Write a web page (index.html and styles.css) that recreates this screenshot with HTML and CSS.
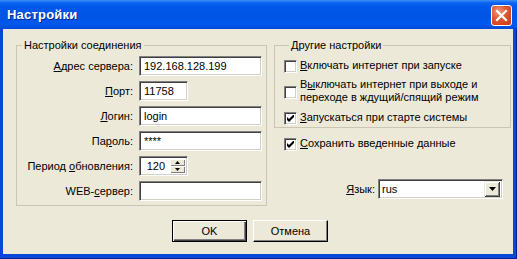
FILE: index.html
```html
<!DOCTYPE html>
<html lang="ru">
<head>
    <meta charset="UTF-8">
    <title>Настройки</title>
    <link rel="stylesheet" href="styles.css">
</head>
<body>
    <div class="window">
        <div class="titlebar">
            <span class="title">Настройки</span>
            <button class="close-btn" aria-label="Закрыть">
                <svg width="13" height="13" viewBox="0 0 13 13">
                    <path d="M2 2 L11 11 M11 2 L2 11" stroke="#fff" stroke-width="2.2" stroke-linecap="square"/>
                </svg>
            </button>
        </div>

        <div class="client">
            <div class="panels">
                <fieldset class="group conn">
                    <legend>Настройки соединения</legend>
                    <div class="form-grid">
                        <label><u>А</u>дрес сервера:</label>
                        <div class="edit wide">192.168.128.199</div>

                        <label><u>П</u>орт:</label>
                        <div class="edit short">11758</div>

                        <label><u>Л</u>огин:</label>
                        <div class="edit wide">login</div>

                        <label>Па<u>р</u>оль:</label>
                        <div class="edit wide">****</div>

                        <label>Период <u>о</u>бновления:</label>
                        <div class="edit short spin">
                            <span class="spin-value">120</span>
                            <span class="spin-btns">
                                <span class="spin-btn"><svg width="5" height="3" viewBox="0 0 5 3"><path d="M2.5 0 L5 3 L0 3Z" fill="#000"/></svg></span>
                                <span class="spin-btn"><svg width="5" height="3" viewBox="0 0 5 3"><path d="M0 0 L5 0 L2.5 3Z" fill="#000"/></svg></span>
                            </span>
                        </div>

                        <label>WEB-<u>с</u>ервер:</label>
                        <div class="edit wide"></div>
                    </div>
                </fieldset>

                <div class="right-col">
                    <fieldset class="group other">
                        <legend>Другие настройки</legend>
                        <div class="check-row">
                            <span class="check"></span>
                            <span class="check-text"><u>В</u>ключать интернет при запуске</span>
                        </div>
                        <div class="check-row row-2">
                            <span class="check"></span>
                            <span class="check-text">В<u>ы</u>ключать интернет при выходе и<br>переходе в ждущий/спящий режим</span>
                        </div>
                        <div class="check-row row-3">
                            <span class="check checked"><svg width="7" height="7" viewBox="0 0 7 7"><path d="M0 2 L0 5 L2 7 L7 2 L7 -1 L2 4Z" fill="#000"/></svg></span>
                            <span class="check-text"><u>З</u>апускаться при старте системы</span>
                        </div>
                    </fieldset>

                    <div class="check-row save-row">
                        <span class="check checked"><svg width="7" height="7" viewBox="0 0 7 7"><path d="M0 2 L0 5 L2 7 L7 2 L7 -1 L2 4Z" fill="#000"/></svg></span>
                        <span class="check-text"><u>С</u>охранить введенные данные</span>
                    </div>

                    <div class="lang-row">
                        <label><u>Я</u>зык:</label>
                        <div class="edit combo">
                            <span class="combo-value">rus</span>
                            <span class="combo-btn"><svg width="7" height="4" viewBox="0 0 7 4"><path d="M0 0 L7 0 L3.5 4Z" fill="#000"/></svg></span>
                        </div>
                    </div>
                </div>
            </div>

            <div class="buttons">
                <button class="btn default">OK</button>
                <button class="btn">Отмена</button>
            </div>
        </div>
    </div>
</body>
</html>
```

FILE: styles.css
```css
body {
    margin: 0;
    background-color: #0a46d8;
}

.window {
    width: 517px;
    height: 259px;
    display: flex;
    flex-direction: column;
    background-color: #0a46d8;
    box-shadow: inset -1px -1px 0 #00209a;
    font-family: "Liberation Sans", Arial, sans-serif;
    font-size: 11px;
    color: #000;
}

/* title bar */
.titlebar {
    height: 29px;
    flex: none;
    display: flex;
    align-items: center;
    justify-content: space-between;
    padding: 0 5px 0 7px;
    background: linear-gradient(to bottom, #3d8ff8 0, #0b62f0 3px, #0058ea 7px, #0054e5 55%, #0058ec 85%, #0549d8 100%);
}

.title {
    color: #fff;
    font-weight: bold;
    font-size: 13px;
    letter-spacing: 0.2px;
    text-shadow: 1px 1px 0 #0a2a8c;
    margin-top: -1px;
}

.close-btn {
    width: 21px;
    height: 21px;
    padding: 0;
    margin-top: 1px;
    border: 1px solid #fff;
    border-radius: 3px;
    background: radial-gradient(circle at 35% 30%, #f09a7c 0, #e0542f 45%, #c43a14 100%);
    display: flex;
    align-items: center;
    justify-content: center;
}

/* client area */
.client {
    flex: 1;
    margin: 0 4px 5px 3px;
    padding: 10px 0 0 13px;
    background-color: #ece9d8;
}

.panels {
    display: flex;
    align-items: flex-start;
    gap: 7px;
}

.group {
    margin: 0;
    border: 1px solid #c9c6b6;
    min-width: 0;
    box-sizing: border-box;
}

.group legend {
    margin-left: 5px;
    padding: 0 2px;
    line-height: 13px;
}

.conn {
    width: 251px;
    padding: 4px 4px 4px 0;
}

.form-grid {
    display: grid;
    grid-template-columns: 116px auto;
    column-gap: 6px;
    row-gap: 5px;
    align-items: center;
    justify-items: start;
}

.form-grid label {
    justify-self: end;
    line-height: 13px;
}

/* sunken edit */
.edit {
    box-sizing: border-box;
    height: 20px;
    padding: 0 4px;
    line-height: 18px;
    background-color: #fff;
    border: 1px solid;
    border-color: #808080 #fff #fff #808080;
    box-shadow: inset 1px 1px 0 #404040, inset -1px -1px 0 #d4d0c8;
    white-space: nowrap;
}

.wide {
    width: 123px;
}

.short {
    width: 49px;
}

.spin {
    display: flex;
    padding: 2px 2px 2px 0;
}

.spin-value {
    flex: 1;
    text-align: right;
    padding-right: 5px;
    line-height: 14px;
}

.spin-btns {
    width: 15px;
    display: flex;
    flex-direction: column;
}

.spin-btn {
    flex: 1;
    display: flex;
    align-items: center;
    justify-content: center;
    background-color: #ece9d8;
    box-shadow: inset 1px 1px 0 #fff, inset -1px -1px 0 #808080;
}

/* right column */
.right-col {
    width: 237px;
}

.other {
    width: 237px;
    padding: 8px 0 2px 9px;
}

.check-row {
    display: flex;
    align-items: center;
    gap: 3px;
}

.check-text {
    line-height: 13px;
    margin-top: -3px;
}

.row-2 {
    margin-top: 7px;
}

.row-2 .check-text {
    margin-top: -2px;
}

.row-3 {
    margin-top: 8px;
}

.check {
    width: 13px;
    height: 13px;
    flex: none;
    box-sizing: border-box;
    background-color: #fff;
    border: 1px solid;
    border-color: #808080 #fff #fff #808080;
    box-shadow: inset 1px 1px 0 #404040, inset -1px -1px 0 #d4d0c8;
    display: flex;
    align-items: center;
    justify-content: center;
}

.save-row {
    margin-top: 10px;
    padding-left: 10px;
}

.lang-row {
    margin-top: 28px;
    padding-right: 8px;
    display: flex;
    justify-content: flex-end;
    align-items: center;
    gap: 3px;
}

.combo {
    width: 125px;
    display: flex;
    align-items: center;
    padding: 2px 2px 2px 3px;
}

.combo-value {
    flex: 1;
    line-height: 14px;
}

.combo-btn {
    width: 16px;
    height: 16px;
    display: flex;
    align-items: center;
    justify-content: center;
    background-color: #ece9d8;
    box-shadow: inset 1px 1px 0 #ece9d8, inset -1px -1px 0 #404040, inset 2px 2px 0 #fff, inset -2px -2px 0 #808080;
}

/* buttons */
.buttons {
    margin-top: 14px;
    padding-left: 156px;
    display: flex;
    gap: 6px;
}

.btn {
    width: 75px;
    height: 22px;
    padding: 0;
    font-family: inherit;
    font-size: 11px;
    color: #000;
    background-color: #ece9d8;
    border: 1px solid;
    border-color: #fff #000 #000 #fff;
    box-shadow: inset -1px -1px 0 #808080;
}

.btn.default {
    border-color: #000;
    box-shadow: inset 1px 1px 0 #fff, inset -1px -1px 0 #404040, inset -2px -2px 0 #808080;
}
```
